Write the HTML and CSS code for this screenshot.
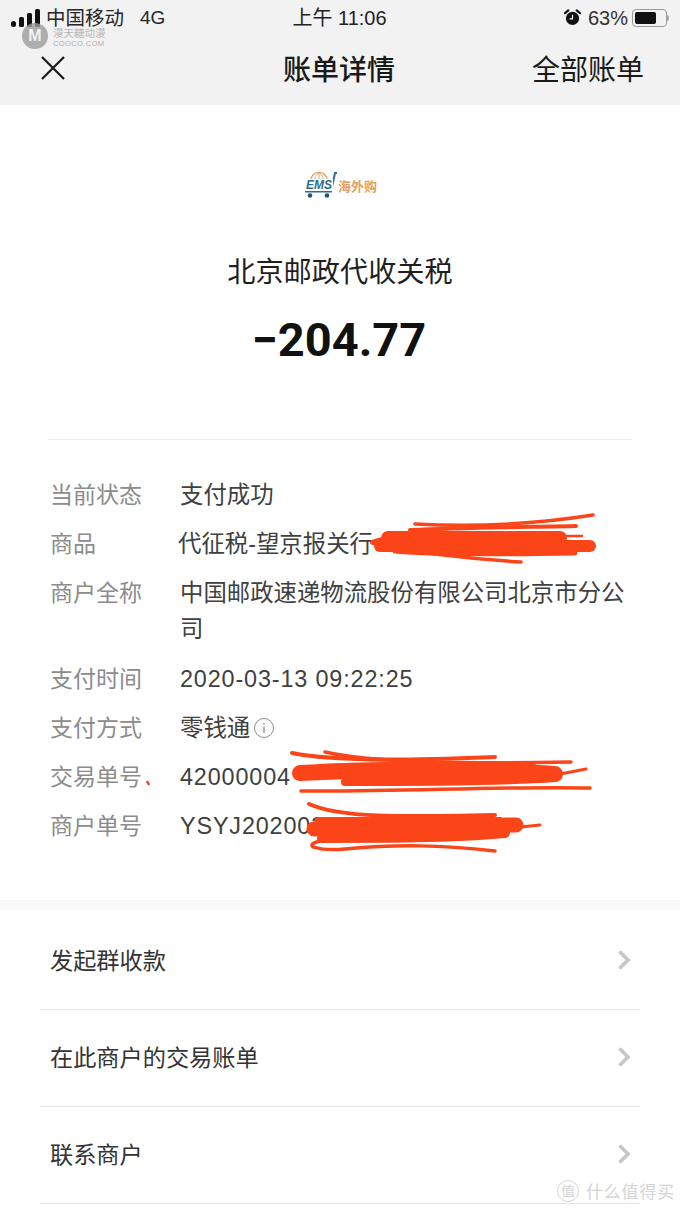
FILE: index.html
```html
<!DOCTYPE html>
<html lang="zh">
<head>
    <meta charset="utf-8">
    <title>账单详情</title>
    <link rel="stylesheet" href="styles.css">
</head>
<body>
    <div class="page">
        <header class="top">
            <div class="status">
                <div class="status-left">
                    <svg class="signal" width="29" height="18" viewBox="0 0 29 18">
                        <rect x="0" y="12" width="5" height="6" rx="2.5"/>
                        <rect x="8" y="8" width="5" height="10" rx="1.5"/>
                        <rect x="16" y="4" width="5" height="14" rx="1.5"/>
                        <rect x="24" y="0" width="5" height="18" rx="1.5"/>
                    </svg>
                    <span>中国移动</span>
                    <span class="net">4G</span>
                </div>
                <div class="status-time">上午 11:06</div>
                <div class="status-right">
                    <svg class="alarm" width="17" height="17" viewBox="0 0 18 18">
                        <circle cx="9" cy="10" r="7"/>
                        <path d="M1 4.5 L4.5 1.5 M13.5 1.5 L17 4.5" stroke="#111" stroke-width="2.4" stroke-linecap="round"/>
                        <path d="M9 6 V10.5 H6" stroke="#fff" stroke-width="1.2" fill="none"/>
                    </svg>
                    <span>63%</span>
                    <div class="battery"><div class="battery-fill"></div></div>
                </div>
            </div>
            <nav class="navbar">
                <svg class="close" width="24" height="24" viewBox="0 0 24 24">
                    <path d="M1 1 L23 23 M23 1 L1 23" stroke="#1a1a1a" stroke-width="2.2" fill="none"/>
                </svg>
                <div class="nav-title">账单详情</div>
                <div class="nav-link">全部账单</div>
            </nav>
        </header>

        <section class="summary">
            <div class="logo">
                <svg class="logo-mark" width="33" height="26" viewBox="0 0 33 26">
                    <circle cx="15" cy="9" r="8.5" fill="none" stroke="#d9a066" stroke-width="1.2"/>
                    <path d="M15 0.5 V17 M6.5 9 H23.5 M15 0.5 C9 5 9 13 15 17 M15 0.5 C21 5 21 13 15 17" fill="none" stroke="#d9a066" stroke-width="0.9"/>
                    <path d="M1 19.5 H27 L31 1 H33" fill="none" stroke="#2f6d8c" stroke-width="2"/>
                    <circle cx="6" cy="23.5" r="2.3" fill="#24566f"/>
                    <circle cx="23" cy="23.5" r="2.3" fill="#24566f"/>
                </svg>
                <span class="logo-ems">EMS</span>
                <span class="logo-text">海外购</span>
            </div>
            <h1 class="payee">北京邮政代收关税</h1>
            <div class="amount">−204.77</div>
        </section>

        <section class="details">
            <div class="row"><div class="label">当前状态</div><div class="value">支付成功</div></div>
            <div class="row"><div class="label">商品</div><div class="value value-tight">代征税-望京报关行</div></div>
            <div class="row row-wrap"><div class="label">商户全称</div><div class="value">中国邮政速递物流股份有限公司北京市分公司</div></div>
            <div class="row"><div class="label">支付时间</div><div class="value value-num">2020-03-13 09:22:25</div></div>
            <div class="row">
                <div class="label">支付方式</div>
                <div class="value value-icon">零钱通
                    <svg width="22" height="22" viewBox="0 0 22 22">
                        <circle cx="11" cy="11" r="9.5" fill="none" stroke="#8c8c8c" stroke-width="1"/>
                        <path d="M11 9.5 V16 M11 6 V7.6" stroke="#8c8c8c" stroke-width="1.3"/>
                    </svg>
                </div>
            </div>
            <div class="row"><div class="label">交易单号</div><div class="value value-num">42000004</div></div>
            <div class="row"><div class="label">商户单号</div><div class="value value-num">YSYJ202003</div></div>
        </section>

        <div class="band"></div>

        <ul class="actions">
            <li><span>发起群收款</span><svg class="chev" width="14" height="22" viewBox="0 0 14 22"><path d="M2.5 2.5 L11 11 L2.5 19.5" fill="none" stroke="#c6c6c6" stroke-width="3.6"/></svg></li>
            <li><span>在此商户的交易账单</span><svg class="chev" width="14" height="22" viewBox="0 0 14 22"><path d="M2.5 2.5 L11 11 L2.5 19.5" fill="none" stroke="#c6c6c6" stroke-width="3.6"/></svg></li>
            <li><span>联系商户</span><svg class="chev" width="14" height="22" viewBox="0 0 14 22"><path d="M2.5 2.5 L11 11 L2.5 19.5" fill="none" stroke="#c6c6c6" stroke-width="3.6"/></svg></li>
        </ul>

        <!-- red pen scribbles over the private numbers -->
        <svg class="scribble" width="680" height="1209" viewBox="0 0 680 1209">
            <g fill="none" stroke="#fb4518" stroke-linecap="round">
                <path d="M388 538 L560 538" stroke-width="14"/>
                <path d="M380 546 L590 546" stroke-width="12"/>
                <path d="M372 542 L392 536" stroke-width="4"/>
                <path d="M415 524 C470 527 530 525 593 515" stroke-width="3.5"/>
                <path d="M410 530 C470 527 540 527 576 526" stroke-width="4"/>
                <path d="M372 543 C410 552 470 559 521 562" stroke-width="3.5"/>
                <path d="M395 551 C440 555 520 554 575 553" stroke-width="5"/>
                <path d="M500 536 L582 536" stroke-width="2.5"/>

                <path d="M292 753 C340 763 440 759 495 757" stroke-width="4"/>
                <path d="M325 752 C370 762 440 764 571 762" stroke-width="3.5"/>
                <path d="M300 773 C360 770 480 770 555 774" stroke-width="16"/>
                <path d="M320 767 C400 764 480 764 534 767" stroke-width="6"/>
                <path d="M345 782 C420 782 500 782 555 778" stroke-width="8"/>
                <path d="M301 791 C400 792 500 786 590 788" stroke-width="3.5"/>
                <path d="M550 776 L586 769" stroke-width="3"/>

                <path d="M309 804 C340 818 400 817 495 815" stroke-width="4"/>
                <path d="M318 820 L500 820" stroke-width="6"/>
                <path d="M314 829 C380 825 460 825 516 825" stroke-width="15"/>
                <path d="M322 838 C380 838 450 838 505 833" stroke-width="10"/>
                <path d="M500 829 L540 825" stroke-width="3"/>
                <path d="M320 841 C300 846 320 851 345 849 C400 844 440 845 495 851" stroke-width="3.5"/>
            </g>
            <path d="M147 781 L149 785" stroke="#e8432a" stroke-width="2.4" fill="none"/>
        </svg>

        <div class="mark-top">
            <div class="mark-ball">M</div>
            <div class="mark-words">
                <div class="mark-cn">漫天糖动漫</div>
                <div class="mark-en">COOCO.COM</div>
            </div>
        </div>
        <div class="mark-bottom">
            <span class="mark-zhi">值</span>
            <span>什么值得买</span>
        </div>
    </div>
</body>
</html>
```

FILE: styles.css
```css
* {
    box-sizing: border-box;
}

body {
    margin: 0;
    padding: 0;
    background-color: #ffffff;
    font-family: "Liberation Sans", "Noto Sans CJK SC", sans-serif;
    color: #1a1a1a;
}

.page {
    position: relative;
    width: 680px;
    height: 1209px;
    overflow: hidden;
}

.top {
    height: 105px;
    background-color: #f2f2f2;
}

.status {
    display: grid;
    grid-template-columns: 1fr auto 1fr;
    align-items: center;
    height: 35px;
    padding: 0 12px 0 11px;
    font-size: 19.5px;
    line-height: 20px;
}

.status-left {
    display: flex;
    align-items: center;
    gap: 6px;
    color: #262626;
}

.net {
    margin-left: 10px;
    font-size: 19px;
}

.signal {
    fill: #111111;
}

.status-time {
    font-size: 20px;
    color: #222222;
}

.status-right {
    display: flex;
    align-items: center;
    justify-content: flex-end;
    gap: 7px;
    font-size: 20px;
    color: #333333;
}

.alarm {
    fill: #111111;
}

.battery {
    position: relative;
    width: 35px;
    height: 18px;
    margin-left: -3px;
    margin-right: 1px;
    padding: 2px;
    border: 1px solid #9a9a9a;
    border-radius: 4px;
}

.battery::after {
    content: "";
    position: absolute;
    left: 34px;
    top: 5px;
    width: 2px;
    height: 6px;
    background-color: #a8a8a8;
    border-radius: 0 2px 2px 0;
}

.battery-fill {
    width: 21px;
    height: 12px;
    background-color: #111111;
    border-radius: 2px;
}

.navbar {
    display: flex;
    align-items: center;
    justify-content: space-between;
    height: 70px;
    padding: 0 36px 0 41px;
    margin-top: -2px;
}

.close {
    flex-shrink: 0;
}

.nav-title {
    font-size: 28px;
    font-weight: 500;
    margin-left: 218px;
}

.nav-link {
    font-size: 28px;
    margin-left: auto;
}

.summary {
    display: flex;
    flex-direction: column;
    align-items: center;
    height: 335px;
    margin: 0 48px;
    padding-top: 67px;
    border-bottom: 1px solid #ececec;
}

.logo {
    display: flex;
    align-items: center;
    gap: 1px;
    position: relative;
    height: 26px;
    width: 72px;
}

.logo-ems {
    position: absolute;
    left: 1px;
    top: 7px;
    padding: 0 1px;
    font-size: 12px;
    font-weight: bold;
    font-style: italic;
    color: #2f6d8c;
    background-color: #ffffff;
    line-height: 12px;
}

.logo-mark {
    flex-shrink: 0;
}

.logo-text {
    font-size: 13px;
    font-weight: bold;
    color: #e2a063;
    white-space: nowrap;
}

.payee {
    margin: 54px 0 0;
    font-size: 28.2px;
    font-weight: 400;
    line-height: 40px;
    color: #1f1f1f;
}

.amount {
    margin: 21px 2px 0 0;
    font-family: "Roboto", "Liberation Sans", sans-serif;
    font-size: 47px;
    font-weight: 700;
    line-height: 54px;
    color: #111111;
}

.details {
    display: flex;
    flex-direction: column;
    gap: 13px;
    padding: 37px 50px 0;
    height: 460px;
    font-size: 23px;
    line-height: 36px;
}

.row {
    display: flex;
}

.row-wrap {
    margin-bottom: 1px;
}

.label {
    flex: 0 0 130px;
    color: #8c8c8c;
}

.value {
    font-size: 23.4px;
    color: #404040;
}

.value-num {
    letter-spacing: 0.85px;
}

.value-tight {
    margin-left: -2px;
}

.value-icon {
    display: flex;
    align-items: center;
    gap: 3px;
}

.band {
    height: 10px;
    background-color: #f8f8f8;
}

.actions {
    list-style: none;
    margin: 0;
    padding: 3px 0 0;
}

.actions li {
    display: flex;
    align-items: center;
    justify-content: space-between;
    height: 97px;
    margin: 0 40px;
    padding: 0 9px 5px 10px;
    border-bottom: 1px solid #e6e6e6;
    font-size: 23.2px;
    color: #333333;
}

.chev {
    flex-shrink: 0;
    margin-top: 3px;
}

.scribble {
    position: absolute;
    left: 0;
    top: 0;
    pointer-events: none;
}

.mark-top {
    position: absolute;
    left: 22px;
    top: 23px;
    display: flex;
    align-items: flex-start;
    gap: 5px;
    opacity: 0.8;
}

.mark-ball {
    width: 26px;
    height: 26px;
    border-radius: 50%;
    background-color: #9c9c9c;
    color: #f2f2f2;
    font-size: 16px;
    font-weight: bold;
    line-height: 26px;
    text-align: center;
}

.mark-words {
    padding-top: 5px;
}

.mark-cn {
    font-size: 10.5px;
    line-height: 11px;
    color: #a8a8a8;
}

.mark-en {
    font-size: 7.5px;
    line-height: 10px;
    letter-spacing: 0.4px;
    color: #9c9c9c;
}

.mark-bottom {
    position: absolute;
    right: 5px;
    top: 1178px;
    display: flex;
    align-items: center;
    gap: 7px;
    font-size: 17px;
    letter-spacing: 0.8px;
    color: #d4d4d4;
}

.mark-zhi {
    width: 22px;
    height: 22px;
    border: 1px solid #d4d4d4;
    border-radius: 50%;
    font-size: 14px;
    line-height: 20px;
    letter-spacing: 0;
    text-align: center;
}
```
